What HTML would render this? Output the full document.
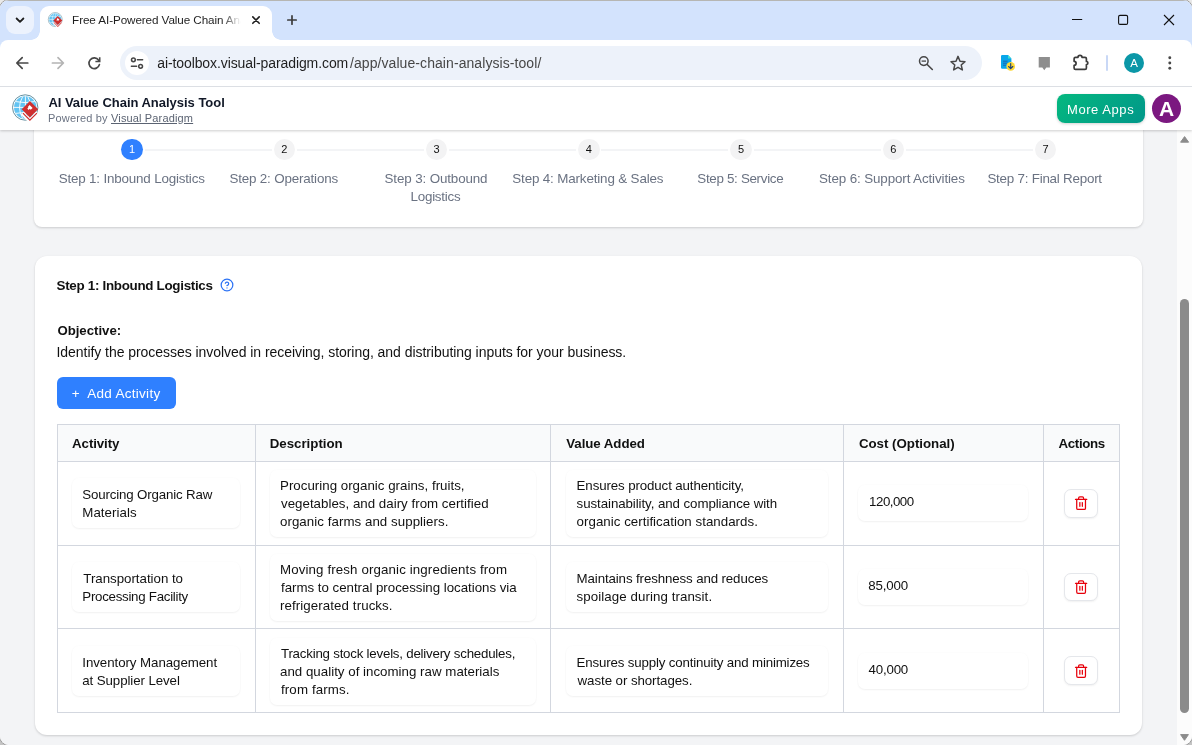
<!DOCTYPE html>
<html lang="en">
<head>
<meta charset="utf-8">
<title>Free AI-Powered Value Chain Analysis Tool</title>
<style>
*{box-sizing:border-box;margin:0;padding:0}
html,body{width:1192px;height:745px;overflow:hidden;background:linear-gradient(#e9e9e9 50%,#c4c4c4 50%)}
body{font-family:"Liberation Sans",sans-serif;color:#111;position:relative}
.abs{position:absolute}
#win{position:absolute;left:0;top:0;width:1192px;height:745px;border-radius:9px;overflow:hidden;background:#f3f4f6;will-change:transform}
#ring{position:absolute;left:-1px;top:-1px;width:1194px;height:747px;border-radius:10px;border:1.5px solid #9c9c9c;pointer-events:none}
/* ---------- browser chrome ---------- */
#tabstrip{position:absolute;left:0;top:0;width:1192px;height:50px;background:#d3e3fd;border-top:1px solid #b6b6b3}
#tabsearch{position:absolute;left:6px;top:6px;width:28px;height:28px;border-radius:9px;background:#ecf2fd}
#tab{position:absolute;left:40px;top:6px;width:232px;height:34px;background:#fff;border-radius:9px 9px 0 0}
#tab:before,#tab:after{content:"";position:absolute;bottom:0;width:9px;height:9px}
#tab:before{left:-9px;background:radial-gradient(circle at 0 0,transparent 8.5px,#fff 9px)}
#tab:after{right:-9px;background:radial-gradient(circle at 100% 0,transparent 8.5px,#fff 9px)}
#tabtitle{position:absolute;left:32px;top:6px;width:170px;height:16px;font-size:12px;line-height:16px;color:#1f1f1f;white-space:nowrap;overflow:hidden;
 -webkit-mask-image:linear-gradient(90deg,#000 140px,transparent 168px);mask-image:linear-gradient(90deg,#000 140px,transparent 168px)}
#toolbar{position:absolute;left:0;top:40px;width:1192px;height:46px;background:#fff;border-radius:8px 8px 0 0}
#tbline{position:absolute;left:0;top:86px;width:1192px;height:1px;background:#dcdfe4}
#omni{position:absolute;left:120px;top:46px;width:862px;height:34px;border-radius:17px;background:#edf2fa}
#siteinfo{position:absolute;left:124.7px;top:51px;width:24px;height:24px;border-radius:12px;background:#fff}
#url{position:absolute;left:157px;top:54px;font-size:14px;line-height:18px;color:#1f1f1f;white-space:nowrap;letter-spacing:.05px}
#url span{color:#474747}
svg{position:absolute;overflow:visible}
/* ---------- app header ---------- */
#apphead{position:absolute;left:0;top:87px;width:1192px;height:43px;background:#fff;box-shadow:0 1px 3px rgba(0,0,0,.13),0 1px 2px rgba(0,0,0,.08)}
#apptitle{position:absolute;left:48px;top:94px;font-size:14px;line-height:17px;font-weight:700;color:#111827;white-space:nowrap}
#appsub{position:absolute;left:48px;top:111px;font-size:11.5px;line-height:14px;color:#6b7280;white-space:nowrap}
#appsub u{color:#4b5563}
#more{position:absolute;left:1057px;top:94px;width:88px;height:29px;border-radius:8px;background:linear-gradient(135deg,#04b87f,#019789);color:#fff;font-size:13px;line-height:29px;text-align:center;box-shadow:0 1px 3px rgba(0,0,0,.18)}
#avatar{position:absolute;left:1152px;top:94px;width:29px;height:29px;border-radius:50%;background:#7b1880;color:#fff;font-weight:700;font-size:21px;line-height:29px;text-align:center}
/* ---------- page ---------- */
#page{position:absolute;left:0;top:130px;width:1177px;height:615px;background:#f3f4f6;overflow:hidden}
#sb{position:absolute;left:1177px;top:130px;width:15px;height:615px;background:#fcfcfc}
#thumb{position:absolute;left:1180px;top:298.7px;width:9px;height:414.3px;border-radius:5px;background:#8b8b8b}
.card{position:absolute;background:#fff;border-radius:12px;box-shadow:0 1px 3px rgba(0,0,0,.1),0 1px 2px rgba(0,0,0,.07)}
#card1{left:33.7px;top:100px;width:1109.5px;height:126.8px;border-radius:8px}
#card2{left:34.8px;top:255.5px;width:1107.4px;height:479.5px}
.stepc{position:absolute;top:138.5px;width:21.5px;height:21.5px;border-radius:50%;background:#f3f3f4;color:#111;font-size:11px;line-height:21px;text-align:center}
.stepc.on{background:#2f80ff;color:#fff}
.stepl{position:absolute;top:169px;width:152px;text-align:center;font-size:13px;line-height:18px;color:#6b7280}
.sline{position:absolute;top:149px;height:2px;background:#f3f4f6}
h2{position:absolute;left:57px;top:276px;font-size:14px;line-height:18px;font-weight:700;color:#111;white-space:nowrap}
#obj{position:absolute;left:57px;top:321px;font-size:13.5px;line-height:18px;font-weight:700;white-space:nowrap}
#objt{position:absolute;left:57px;top:343px;font-size:13.5px;line-height:18px;white-space:nowrap}
#add{position:absolute;left:57px;top:377px;width:119px;height:32px;border-radius:6px;background:#2f80ff;color:#fff;font-size:13.5px;line-height:32px;white-space:nowrap}
#add span{position:absolute;top:0}
.t{position:absolute;line-height:18px;white-space:nowrap}
/* table */
#tbl{position:absolute;left:57px;top:424px;width:1063px;height:289px;border:1px solid #d3d7df;background:#fff}
#thead{position:absolute;left:58px;top:425px;width:1061px;height:36px;background:#f9fafb}
.vl{position:absolute;top:424px;width:1px;height:289px;background:#d3d7df}
.hl{position:absolute;left:57px;width:1063px;height:1px;background:#d3d7df}
.th{position:absolute;top:434px;font-size:14px;line-height:18px;font-weight:700;color:#111;white-space:nowrap}
.box{position:absolute;background:#fff;border-radius:7px;box-shadow:0 1px 2px rgba(0,0,0,.05),0 0 0 1px rgba(0,0,0,.008)}
.tx{position:absolute;font-size:13px;line-height:18px;color:#111;white-space:nowrap}
.del{position:absolute;left:1064.3px;width:34.2px;height:28.5px;border-radius:7px;background:#fff;border:1px solid #e5e7eb;box-shadow:0 1px 2px rgba(0,0,0,.06)}
</style>
</head>
<body>
<div id="ring"></div>
<div id="win">
<svg width="0" height="0" style="left:0;top:0"><defs>
<g id="logo">
<circle cx="25.2" cy="107.5" r="12.7" fill="#fff" stroke="#3d7387" stroke-width="0.8"/>
<circle cx="25.2" cy="107.5" r="11.2" fill="#62c4f3"/>
<g stroke="#fff" stroke-width="0.9" fill="none">
<path d="M14 107.4 H36.4"/>
<path d="M15.6 101.6 Q25.2 103.6 34.8 101.6"/>
<path d="M15.6 113.4 Q25.2 111.4 34.8 113.4"/>
<path d="M25.4 96.3 V118.7"/>
<path d="M22.6 96.8 Q16.4 107.5 22.6 118.2"/>
<path d="M27.8 96.8 Q34 107.5 27.8 118.2"/>
</g>
<path d="M22.2 113 L29.9 120.7 L37.6 113" stroke="#fff" stroke-width="4" fill="none"/>
<path d="M22.5 113.5 L29.9 120.9 L37.3 113.5 L36.45 112.65 L29.9 119.2 L23.35 112.65 Z" fill="#cf2f2f"/>
<path d="M29.9 101.1 L38.1 109.3 L29.9 117.5 L21.7 109.3 Z" fill="#cf2f2f"/>
<path d="M29.6 104.9 L32.6 107.9 L30.7 109.8 L29.7 108.8 L28.6 109.9 L27.3 108.6 L28.4 107.5 L27.9 107 Z" fill="#fff"/>
</g>
</defs></svg>

<!-- page content -->
<div id="page"></div>
<div class="card" id="card1"></div>
<div class="card" id="card2"></div>

<!-- stepper -->
<div class="sline" style="left:144.6px;width:127.05px"></div>
<div class="sline" style="left:296.85px;width:127.05px"></div>
<div class="sline" style="left:449.1px;width:127.05px"></div>
<div class="sline" style="left:601.35px;width:127.05px"></div>
<div class="sline" style="left:753.6px;width:127.05px"></div>
<div class="sline" style="left:905.85px;width:127.05px"></div>
<div class="stepc on" style="left:121.25px">1</div>
<div class="stepc" style="left:273.5px">2</div>
<div class="stepc" style="left:425.75px">3</div>
<div class="stepc" style="left:578px">4</div>
<div class="stepc" style="left:730.25px">5</div>
<div class="stepc" style="left:882.5px">6</div>
<div class="stepc" style="left:1034.75px">7</div>

<!-- main card -->
<svg style="left:220.2px;top:278.1px" width="14" height="14" viewBox="0 0 24 24" fill="none" stroke="#2b72f5" stroke-width="2.1" stroke-linecap="round" stroke-linejoin="round"><circle cx="12" cy="12" r="10"/><path d="M9.09 9a3 3 0 0 1 5.83 1c0 2-3 3-3 3"/><path d="M12 17h.01"/></svg>
<div id="add"></div>

<div id="tbl"></div>
<div id="thead"></div>
<div class="vl" style="left:255px"></div>
<div class="vl" style="left:550px"></div>
<div class="vl" style="left:843px"></div>
<div class="vl" style="left:1043px"></div>
<div class="hl" style="top:461px"></div>
<div class="hl" style="top:545px"></div>
<div class="hl" style="top:628px"></div>

<!-- row 1 -->
<div class="box" style="left:72px;top:478px;width:168px;height:50px"></div>
<div class="box" style="left:270px;top:470px;width:266px;height:67px"></div>
<div class="box" style="left:566px;top:470px;width:262px;height:67px"></div>
<div class="box" style="left:858px;top:485px;width:170px;height:36px"></div>
<div class="del" style="top:489.2px"></div>

<!-- row 2 -->
<div class="box" style="left:72px;top:562px;width:168px;height:50px"></div>
<div class="box" style="left:270px;top:554px;width:266px;height:67px"></div>
<div class="box" style="left:566px;top:562px;width:262px;height:50px"></div>
<div class="box" style="left:858px;top:569px;width:170px;height:36px"></div>
<div class="del" style="top:572.9px"></div>

<!-- row 3 -->
<div class="box" style="left:72px;top:646px;width:168px;height:50px"></div>
<div class="box" style="left:270px;top:638px;width:266px;height:67px"></div>
<div class="box" style="left:566px;top:646px;width:262px;height:50px"></div>
<div class="box" style="left:858px;top:653px;width:170px;height:36px"></div>
<div class="del" style="top:656.1px"></div>

<div class="t" style="left:58.7px;top:170px;font-size:13.4px;letter-spacing:-0.175px;color:#6a7282">Step 1: Inbound Logistics</div>
<div class="t" style="left:229.4px;top:170px;font-size:13.4px;letter-spacing:-0.171px;color:#6a7282">Step 2: Operations</div>
<div class="t" style="left:384.5px;top:170px;font-size:13.4px;letter-spacing:-0.127px;color:#6a7282">Step 3: Outbound</div>
<div class="t" style="left:410.5px;top:188px;font-size:13.4px;letter-spacing:-0.238px;color:#6a7282">Logistics</div>
<div class="t" style="left:512.3px;top:170px;font-size:13.4px;letter-spacing:-0.15px;color:#6a7282">Step 4: Marketing &amp; Sales</div>
<div class="t" style="left:697.3px;top:170px;font-size:13.4px;letter-spacing:-0.321px;color:#6a7282">Step 5: Service</div>
<div class="t" style="left:819px;top:170px;font-size:13.4px;letter-spacing:-0.12px;color:#6a7282">Step 6: Support Activities</div>
<div class="t" style="left:987.4px;top:170px;font-size:13.4px;letter-spacing:-0.232px;color:#6a7282">Step 7: Final Report</div>
<div class="t" style="left:56.5px;top:277px;font-size:13.4px;font-weight:700;letter-spacing:-0.3px;color:#111111">Step 1: Inbound Logistics</div>
<div class="t" style="left:57.4px;top:322px;font-size:13.2px;font-weight:700;color:#111111">Objective:</div>
<div class="t" style="left:56.5px;top:343px;font-size:14px;letter-spacing:-0.048px;color:#111111">Identify the processes involved in receiving, storing, and distributing inputs for your business.</div>
<div class="t" style="left:71.8px;top:385px;font-size:13.5px;color:#ffffff">+</div>
<div class="t" style="left:87.3px;top:385px;font-size:13.5px;letter-spacing:0.282px;color:#ffffff">Add Activity</div>
<div class="t" style="left:72.1px;top:435px;font-size:13.3px;font-weight:700;letter-spacing:-0.1px;color:#111111">Activity</div>
<div class="t" style="left:269.7px;top:435px;font-size:13.3px;font-weight:700;letter-spacing:-0.01px;color:#111111">Description</div>
<div class="t" style="left:566.3px;top:435px;font-size:13.3px;font-weight:700;letter-spacing:-0.07px;color:#111111">Value Added</div>
<div class="t" style="left:858.9px;top:435px;font-size:13.3px;font-weight:700;letter-spacing:-0.014px;color:#111111">Cost (Optional)</div>
<div class="t" style="left:1058.5px;top:435px;font-size:13.3px;font-weight:700;letter-spacing:-0.35px;color:#111111">Actions</div>
<div class="t" style="left:82.3px;top:486px;font-size:13.3px;letter-spacing:-0.153px;color:#111111">Sourcing Organic Raw</div>
<div class="t" style="left:82.3px;top:504px;font-size:13.3px;letter-spacing:0.05px;color:#111111">Materials</div>
<div class="t" style="left:83.3px;top:570px;font-size:13.3px;letter-spacing:-0.019px;color:#111111">Transportation to</div>
<div class="t" style="left:82.3px;top:588px;font-size:13.3px;letter-spacing:-0.272px;color:#111111">Processing Facility</div>
<div class="t" style="left:82.3px;top:654px;font-size:13.3px;letter-spacing:-0.063px;color:#111111">Inventory Management</div>
<div class="t" style="left:82.3px;top:672px;font-size:13.3px;letter-spacing:-0.094px;color:#111111">at Supplier Level</div>
<div class="t" style="left:280px;top:477px;font-size:13.3px;letter-spacing:0.016px;color:#111111">Procuring organic grains, fruits,</div>
<div class="t" style="left:281px;top:495px;font-size:13.3px;letter-spacing:0.017px;color:#111111">vegetables, and dairy from certified</div>
<div class="t" style="left:280px;top:513px;font-size:13.3px;letter-spacing:0.052px;color:#111111">organic farms and suppliers.</div>
<div class="t" style="left:280px;top:561px;font-size:13.3px;letter-spacing:0.125px;color:#111111">Moving fresh organic ingredients from</div>
<div class="t" style="left:281px;top:579px;font-size:13.3px;letter-spacing:-0.02px;color:#111111">farms to central processing locations via</div>
<div class="t" style="left:280px;top:597px;font-size:13.3px;letter-spacing:0.089px;color:#111111">refrigerated trucks.</div>
<div class="t" style="left:281px;top:645px;font-size:13.3px;letter-spacing:-0.22px;color:#111111">Tracking stock levels, delivery schedules,</div>
<div class="t" style="left:280px;top:663px;font-size:13.3px;letter-spacing:0.017px;color:#111111">and quality of incoming raw materials</div>
<div class="t" style="left:281px;top:681px;font-size:13.3px;letter-spacing:0.12px;color:#111111">from farms.</div>
<div class="t" style="left:576.6px;top:477px;font-size:13.3px;letter-spacing:-0.114px;color:#111111">Ensures product authenticity,</div>
<div class="t" style="left:576.6px;top:495px;font-size:13.3px;letter-spacing:-0.074px;color:#111111">sustainability, and compliance with</div>
<div class="t" style="left:576.6px;top:513px;font-size:13.3px;letter-spacing:0.029px;color:#111111">organic certification standards.</div>
<div class="t" style="left:576.6px;top:570px;font-size:13.3px;letter-spacing:-0.12px;color:#111111">Maintains freshness and reduces</div>
<div class="t" style="left:576.6px;top:588px;font-size:13.3px;letter-spacing:0.074px;color:#111111">spoilage during transit.</div>
<div class="t" style="left:576.6px;top:654px;font-size:13.3px;letter-spacing:-0.166px;color:#111111">Ensures supply continuity and minimizes</div>
<div class="t" style="left:577.6px;top:672px;font-size:13.3px;letter-spacing:-0.072px;color:#111111">waste or shortages.</div>
<div class="t" style="left:869.1px;top:493px;font-size:13.3px;letter-spacing:-0.5px;color:#111111">120,000</div>
<div class="t" style="left:868.2px;top:577px;font-size:13.3px;letter-spacing:-0.16px;color:#111111">85,000</div>
<div class="t" style="left:868.6px;top:661px;font-size:13.3px;letter-spacing:-0.2px;color:#111111">40,000</div>
<!-- scrollbar -->
<div id="sb"></div>
<div id="thumb"></div>
<svg width="1192" height="745" viewBox="0 0 1192 745" style="left:0;top:0" fill="none">
<g transform="translate(1073.6,495.7) scale(0.625)" stroke="#e7000b" stroke-width="2" stroke-linecap="round" stroke-linejoin="round" fill="none"><path d="M3 6h18"/><path d="M19 6v14c0 1-1 2-2 2H7c-1 0-2-1-2-2V6"/><path d="M8 6V4c0-1 1-2 2-2h4c1 0 2 1 2 2v2"/><path d="M10 11v6"/><path d="M14 11v6"/></g>
<g transform="translate(1073.6,579.5) scale(0.625)" stroke="#e7000b" stroke-width="2" stroke-linecap="round" stroke-linejoin="round" fill="none"><path d="M3 6h18"/><path d="M19 6v14c0 1-1 2-2 2H7c-1 0-2-1-2-2V6"/><path d="M8 6V4c0-1 1-2 2-2h4c1 0 2 1 2 2v2"/><path d="M10 11v6"/><path d="M14 11v6"/></g>
<g transform="translate(1073.6,663.6) scale(0.625)" stroke="#e7000b" stroke-width="2" stroke-linecap="round" stroke-linejoin="round" fill="none"><path d="M3 6h18"/><path d="M19 6v14c0 1-1 2-2 2H7c-1 0-2-1-2-2V6"/><path d="M8 6V4c0-1 1-2 2-2h4c1 0 2 1 2 2v2"/><path d="M10 11v6"/><path d="M14 11v6"/></g>
<path d="M1184.6 136.6 L1188.6 142.2 H1180.6 Z" fill="#8b8b8b" stroke="#8b8b8b" stroke-width="1" stroke-linejoin="round"/>
<path d="M1184.5 740.3 L1188.4 734.6 H1180.6 Z" fill="#8b8b8b" stroke="#8b8b8b" stroke-width="1" stroke-linejoin="round"/>
</svg>

<!-- app header -->
<div id="apphead"></div>
<div id="more"></div>
<div id="avatar">A</div>
<div class="t" style="left:48.4px;top:94px;font-size:13px;font-weight:700;letter-spacing:-0.022px;color:#111827">AI Value Chain Analysis Tool</div>
<div class="t" style="left:48px;top:109px;font-size:11px;letter-spacing:0.167px;color:#6a7282">Powered by</div>
<div class="t" style="left:111px;top:109px;font-size:11px;letter-spacing:0.15px;color:#5b6372;text-decoration:underline;text-underline-offset:1px">Visual Paradigm</div>
<div class="t" style="left:1067px;top:101px;font-size:13px;letter-spacing:0.562px;color:#ffffff">More Apps</div>
<svg width="1192" height="745" viewBox="0 0 1192 745" style="left:0;top:0"><use href="#logo"/></svg>

<!-- browser chrome -->
<div id="tabstrip"></div>
<div id="tabsearch"></div>
<div id="tab"></div>
<div id="toolbar"></div>
<div id="tbline"></div>
<div id="omni"></div>
<div id="siteinfo"></div>
<div class="t" style="left:72.1px;top:11px;font-size:11.7px;letter-spacing:-0.092px;color:#1f1f1f;width:172px;overflow:hidden;-webkit-mask-image:linear-gradient(90deg,#000 150px,transparent 169px);mask-image:linear-gradient(90deg,#000 150px,transparent 169px)">Free AI-Powered Value Chain Analysis Tool</div>
<div class="t" style="left:157.2px;top:54px;font-size:14px;letter-spacing:-0.093px;color:#1f1f1f">ai-toolbox.visual-paradigm.com</div>
<div class="t" style="left:350px;top:54px;font-size:14px;letter-spacing:0.073px;color:#474747">/app/value-chain-analysis-tool/</div>
<svg id="ic" width="1192" height="745" viewBox="0 0 1192 745" style="left:0;top:0" fill="none">
<!-- tab search chevron -->
<path d="M16.6 18.5 L20 21.9 L23.4 18.5" stroke="#1f1f1f" stroke-width="1.8" stroke-linecap="round" stroke-linejoin="round"/>
<!-- favicon -->
<g transform="translate(48,12.1) scale(0.55) translate(-12,-94)">
<use href="#logo"/>
</g>
<!-- tab close -->
<path d="M252.8 16.9 L259.2 23.3 M259.2 16.9 L252.8 23.3" stroke="#1f1f1f" stroke-width="1.6" stroke-linecap="round"/>
<!-- new tab -->
<path d="M287.8 20 H296.2 M292 15.8 V24.2" stroke="#3c3c3c" stroke-width="1.7" stroke-linecap="round"/>
<!-- window controls -->
<path d="M1072 19.5 H1082.2" stroke="#111" stroke-width="1.1"/>
<rect x="1118.6" y="15.4" width="9" height="9" rx="1.4" stroke="#111" stroke-width="1.1"/>
<path d="M1164 15 L1174 25 M1174 15 L1164 25" stroke="#111" stroke-width="1.1"/>
<!-- back -->
<path d="M27.8 63 H17.2 M22.2 57.6 L16.8 63 L22.2 68.4" stroke="#474747" stroke-width="1.7" stroke-linecap="round" stroke-linejoin="round"/>
<!-- forward -->
<path d="M52.4 63 H63 M58 57.6 L63.4 63 L58 68.4" stroke="#b4b4b4" stroke-width="1.7" stroke-linecap="round" stroke-linejoin="round"/>
<!-- reload -->
<path d="M98.6 60.2 A5.3 5.3 0 1 0 99.4 64.6" stroke="#474747" stroke-width="1.7" stroke-linecap="round"/>
<path d="M99.7 57.2 V61.5 H95.4" stroke="#474747" stroke-width="1.6" stroke-linejoin="miter" stroke-linecap="butt"/>
<!-- site info (tune) -->
<circle cx="133.4" cy="59.8" r="1.9" stroke="#474747" stroke-width="1.5"/>
<path d="M137.4 59.8 H142.6" stroke="#474747" stroke-width="1.5" stroke-linecap="round"/>
<circle cx="140.6" cy="66.3" r="1.9" stroke="#474747" stroke-width="1.5"/>
<path d="M131.4 66.3 H136.6" stroke="#474747" stroke-width="1.5" stroke-linecap="round"/>
<!-- zoom out -->
<circle cx="923.8" cy="61.1" r="4.3" stroke="#474747" stroke-width="1.5"/>
<path d="M927.2 64.5 L932.3 69.5" stroke="#474747" stroke-width="1.6" stroke-linecap="round"/>
<path d="M921.6 61.1 H926" stroke="#474747" stroke-width="1.3"/>
<!-- star -->
<path d="M958 56.4 L960 61.2 L965 61.65 L961.2 64.95 L962.35 69.9 L958 67.3 L953.65 69.9 L954.8 64.95 L951 61.65 L956 61.2 Z" stroke="#474747" stroke-width="1.5" stroke-linejoin="round"/>
<!-- doc ext -->
<path d="M1002.2 55 H1008 L1011.4 58.4 V67.5 A1.2 1.2 0 0 1 1010.2 68.7 H1002.2 A1.2 1.2 0 0 1 1001 67.5 V56.2 A1.2 1.2 0 0 1 1002.2 55 Z" fill="#08a6ea"/>
<path d="M1008 55 L1011.4 58.4 H1008 Z" fill="#3fe0d0"/>
<path d="M1003 61.2 H1007.6 M1003 63.2 H1007.6 M1003 65.2 H1006" stroke="#1b5fa8" stroke-width="0.9"/>
<circle cx="1010.7" cy="66.4" r="4.3" fill="#fdd835"/>
<path d="M1010.7 63.6 V68.4 M1008.6 66.5 L1010.7 68.6 L1012.8 66.5" stroke="#1a3f7a" stroke-width="1.1" stroke-linecap="round" stroke-linejoin="round"/>
<!-- gray chat -->
<path d="M1038.7 57 H1049.9 V67.5 H1046.3 L1044.3 70.2 L1042.3 67.5 H1038.7 Z" fill="#8e8e8e"/>
<!-- puzzle -->
<path d="M1075.5 57.3 H1078 A2 2 0 0 1 1082 57.3 H1085 Q1086.4 57.3 1086.4 58.7 V61.5 A1.5 1.5 0 0 1 1086.4 64.5 V67.9 Q1086.4 69.3 1085 69.3 H1075.5 Q1074.1 69.3 1074.1 67.9 V65.3 A2 2 0 0 0 1074.1 61.3 V58.7 Q1074.1 57.3 1075.5 57.3 Z" stroke="#3c3c3c" stroke-width="1.7" stroke-linejoin="round"/>
<!-- separator -->
<rect x="1106" y="55" width="2" height="16" rx="1" fill="#c9d8f6"/>
<!-- avatar -->
<circle cx="1134" cy="63" r="10" fill="#0b97a7"/>
<text x="1134" y="67.1" text-anchor="middle" font-size="11.5" fill="#fff" font-family="'Liberation Sans',sans-serif">A</text>
<!-- kebab -->
<circle cx="1169.8" cy="57.8" r="1.45" fill="#474747"/><circle cx="1169.8" cy="63" r="1.45" fill="#474747"/><circle cx="1169.8" cy="68.2" r="1.45" fill="#474747"/>
</svg>

</div>
</body>
</html>
